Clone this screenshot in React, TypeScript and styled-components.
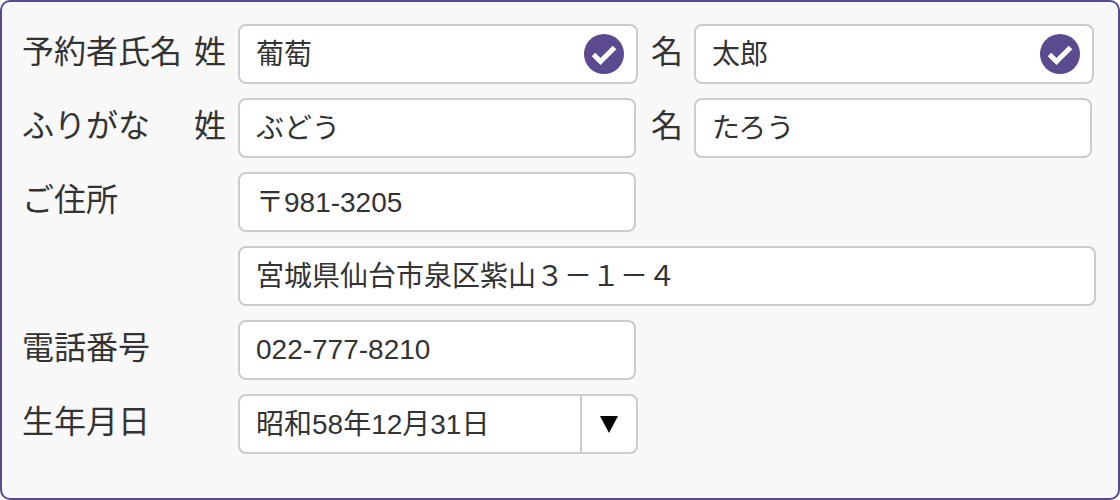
import React from 'react';
import styled, { createGlobalStyle } from 'styled-components';

const GlobalStyle = createGlobalStyle`
  body {
    margin: 0;
    background: #fff;
    font-family: "Liberation Sans", "Noto Sans CJK JP", sans-serif;
    color: #333;
  }
`;

const Panel = styled.form`
  box-sizing: border-box;
  width: 1120px;
  height: 500px;
  padding: 22px 20px;
  display: flex;
  flex-direction: column;
  gap: 14px;
  background: #f8f8f8;
  border: 2px solid #5b4a8f;
  border-radius: 10px;
`;

const Row = styled.div`
  display: flex;
  align-items: center;
  height: 60px;
`;

const Label = styled.label`
  width: 172px;
  flex: none;
  font-size: 32px;
  line-height: 60px;
  margin-top: -4px;
  white-space: nowrap;
`;

const SubLabel = styled.span<{ $width: number; $inset?: number }>`
  box-sizing: border-box;
  width: ${p => p.$width}px;
  padding-left: ${p => p.$inset || 0}px;
  flex: none;
  font-size: 32px;
  line-height: 60px;
  margin-top: -4px;
`;

const Field = styled.div<{ $width: number }>`
  position: relative;
  box-sizing: border-box;
  width: ${p => p.$width}px;
  height: 60px;
  flex: none;
  display: flex;
  align-items: center;
  background: #fff;
  border: 2px solid #ccc;
  border-radius: 8px;
`;

const TextInput = styled.input<{ $latin?: boolean }>`
  flex: 1;
  min-width: 0;
  height: 100%;
  box-sizing: border-box;
  padding: 0 16px ${p => (p.$latin ? 0 : 4)}px;
  border: 0;
  outline: 0;
  background: transparent;
  font-family: inherit;
  font-size: 28px;
  line-height: 32px;
  color: #333;
`;

const CheckBadge = styled.svg`
  position: absolute;
  right: 12px;
  top: 8px;
  width: 40px;
  height: 40px;
`;

const SelectValue = styled.div`
  flex: 1;
  padding: 2px 16px 0;
  font-size: 28px;
  line-height: 32px;
  color: #333;
`;

const SelectArrow = styled.div`
  width: 54px;
  height: 100%;
  flex: none;
  display: flex;
  align-items: center;
  justify-content: center;
  border-left: 2px solid #ccc;
`;

const Check = () => (
  <CheckBadge viewBox="0 0 40 40">
    <circle cx="20" cy="20" r="20" fill="#5b4a8f" />
    <path d="M9.5 20.5 L16.5 27.5 L30.5 13.5" fill="none" stroke="#fff" strokeWidth="5" />
  </CheckBadge>
);

const App: React.FC = () => (
  <>
    <GlobalStyle />
    <Panel>
      <Row>
        <Label>予約者氏名</Label>
        <SubLabel $width={44}>姓</SubLabel>
        <Field $width={400}>
          <TextInput readOnly defaultValue="葡萄" />
          <Check />
        </Field>
        <SubLabel $width={56} $inset={13}>名</SubLabel>
        <Field $width={400}>
          <TextInput readOnly defaultValue="太郎" />
          <Check />
        </Field>
      </Row>
      <Row>
        <Label>ふりがな</Label>
        <SubLabel $width={44}>姓</SubLabel>
        <Field $width={398}>
          <TextInput readOnly defaultValue="ぶどう" />
        </Field>
        <SubLabel $width={58} $inset={15}>名</SubLabel>
        <Field $width={398}>
          <TextInput readOnly defaultValue="たろう" />
        </Field>
      </Row>
      <Row>
        <Label>ご住所</Label>
        <SubLabel $width={44} />
        <Field $width={398}>
          <TextInput readOnly defaultValue="〒981-3205" />
        </Field>
      </Row>
      <Row>
        <Label />
        <SubLabel $width={44} />
        <Field $width={858}>
          <TextInput readOnly defaultValue="宮城県仙台市泉区紫山３－１－４" />
        </Field>
      </Row>
      <Row>
        <Label>電話番号</Label>
        <SubLabel $width={44} />
        <Field $width={398}>
          <TextInput $latin readOnly defaultValue="022-777-8210" />
        </Field>
      </Row>
      <Row>
        <Label>生年月日</Label>
        <SubLabel $width={44} />
        <Field $width={400}>
          <SelectValue>昭和58年12月31日</SelectValue>
          <SelectArrow>
            <svg width="20" height="20" viewBox="0 0 20 20">
              <path d="M1 2 H19 L10 19 Z" fill="#000" />
            </svg>
          </SelectArrow>
        </Field>
      </Row>
    </Panel>
  </>
);

export default App;
